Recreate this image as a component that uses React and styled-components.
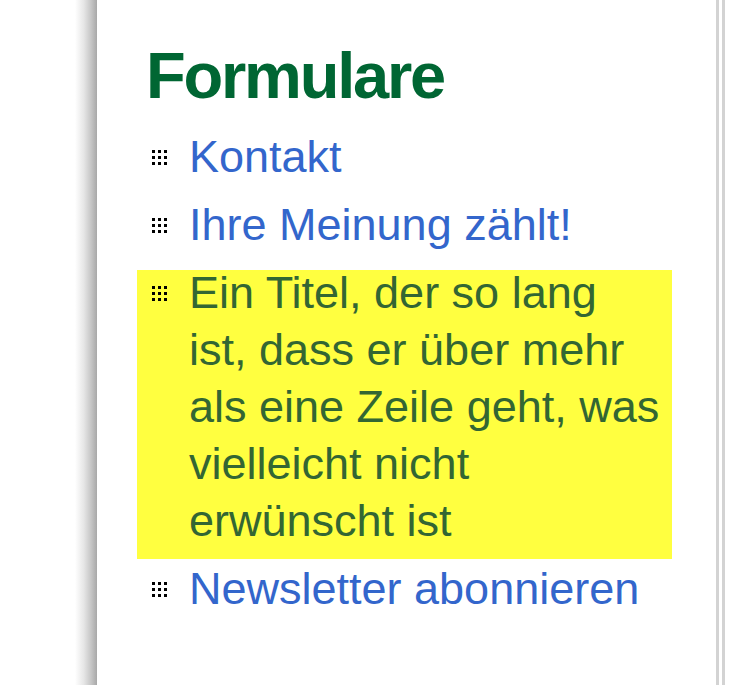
import React from "react";
import styled, { createGlobalStyle } from "styled-components";

const GlobalStyle = createGlobalStyle`
    body {
        margin: 0;
        background: #ffffff;
        font-family: "Liberation Sans", Arial, sans-serif;
    }
`;

const links = [
    { id: 1, title: "Kontakt" },
    { id: 2, title: "Ihre Meinung zählt!" },
    {
        id: 3,
        title: "Ein Titel, der so lang ist, dass er über mehr als eine Zeile geht, was vielleicht nicht erwünscht ist",
        active: true,
    },
    { id: 4, title: "Newsletter abonnieren" },
];

const Bullet = () => (
    <BulletIcon viewBox="0 0 15 15" aria-hidden="true">
        {[0, 6, 12].map((y) =>
            [0, 6, 12].map((x) => <rect key={`${x}-${y}`} x={x} y={y} width="3" height="3" fill="#000" />)
        )}
    </BulletIcon>
);

const App = () => {
    return (
        <>
            <GlobalStyle />
            <Page>
                <Gutter />
                <Shadow />
                <Frame>
                    <Panel>
                        <Title>Formulare</Title>
                        <LinkList>
                            {links.map((link) => (
                                <Item key={link.id} $active={link.active}>
                                    <Bullet />
                                    <Label href="#" $active={link.active}>
                                        {link.title}
                                    </Label>
                                </Item>
                            ))}
                        </LinkList>
                    </Panel>
                </Frame>
            </Page>
        </>
    );
};

const Page = styled.div`
    display: flex;
    min-height: 100vh;
`;

const Gutter = styled.div`
    width: 75px;
    flex-shrink: 0;
`;

const Shadow = styled.div`
    width: 22px;
    flex-shrink: 0;
    background: linear-gradient(to right, #ffffff 0%, #e6e6e6 40%, #c4c4c4 75%, #a8a8a8 100%);
`;

const Frame = styled.div`
    display: flex;
    padding-right: 3px;
    border-right: 3px solid #d3d3d3;
`;

const Panel = styled.div`
    box-sizing: border-box;
    width: 622px;
    padding: 41px 0 0 46px;
    border-right: 3px solid #d3d3d3;
`;

const Title = styled.h1`
    margin: 2px 0 26px 3px;
    font-size: 65px;
    line-height: 65px;
    font-weight: bold;
    letter-spacing: -2.2px;
    color: #006633;
`;

const LinkList = styled.ul`
    width: 535px;
    margin: 0 0 0 -6px;
    padding: 0;
    list-style: none;
`;

const Item = styled.li`
    display: flex;
    align-items: flex-start;
    padding: 0 8px 10px 15px;
    margin-bottom: 7px;
    background: ${({ $active }) => ($active ? "#ffff40" : "transparent")};
`;

const BulletIcon = styled.svg`
    width: 15px;
    height: 15px;
    margin-top: 16px;
    flex-shrink: 0;
`;

const Label = styled.a`
    width: 475px;
    margin: -6px 0 0 22px;
    font-size: 45px;
    line-height: 57px;
    text-decoration: none;
    color: ${({ $active }) => ($active ? "#336633" : "#3366cc")};
`;

export default App;
